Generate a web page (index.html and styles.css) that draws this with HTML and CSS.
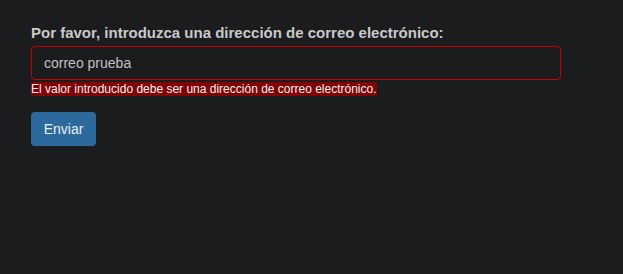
FILE: index.html
```html
<!DOCTYPE html>
<html lang="es">
<head>
<meta charset="utf-8">
<link rel="stylesheet" href="styles.css">
</head>
<body>
<form class="form">
  <label class="label" for="email">Por favor, introduzca una dirección de correo electrónico:</label>
  <input class="input" id="email" type="text" value="correo prueba">
  <div class="error-row"><span class="error">El valor introducido debe ser una dirección de correo electrónico.</span></div>
  <div><button class="btn" type="button">Enviar</button></div>
</form>
</body>
</html>
```
FILE: styles.css
```css
html, body {
  margin: 0;
  padding: 0;
  background: #1b1c1e;
}
body {
  font-family: "Liberation Sans", Arial, sans-serif;
  color: #c8c8c8;
}
.form {
  display: flex;
  flex-direction: column;
  align-items: flex-start;
  padding: 24px 31px;
}
.label {
  font-weight: bold;
  font-size: 15px;
  line-height: 18px;
  color: #c9c9c9;
  margin-bottom: 4px;
}
.input {
  box-sizing: border-box;
  width: 530px;
  height: 34px;
  margin: 0;
  padding: 0 12px;
  border: 1px solid #c50000;
  border-radius: 4px;
  background: #1b1c1e;
  color: #c2c2c2;
  font-family: "Liberation Sans", Arial, sans-serif;
  font-size: 14px;
  outline: none;
}
.error-row {
  margin-top: 3px;
  font-size: 12px;
  line-height: 13px;
}
.error {
  background: #800000;
  color: #f2f2f2;
  font-size: 12px;
  line-height: 13px;
}
.btn {
  margin-top: 16px;
  width: 65px;
  height: 34px;
  padding: 0;
  border: none;
  border-radius: 4px;
  background: #2c6a9e;
  color: #ececec;
  font-family: "Liberation Sans", Arial, sans-serif;
  font-size: 14px;
  display: block;
}
```
